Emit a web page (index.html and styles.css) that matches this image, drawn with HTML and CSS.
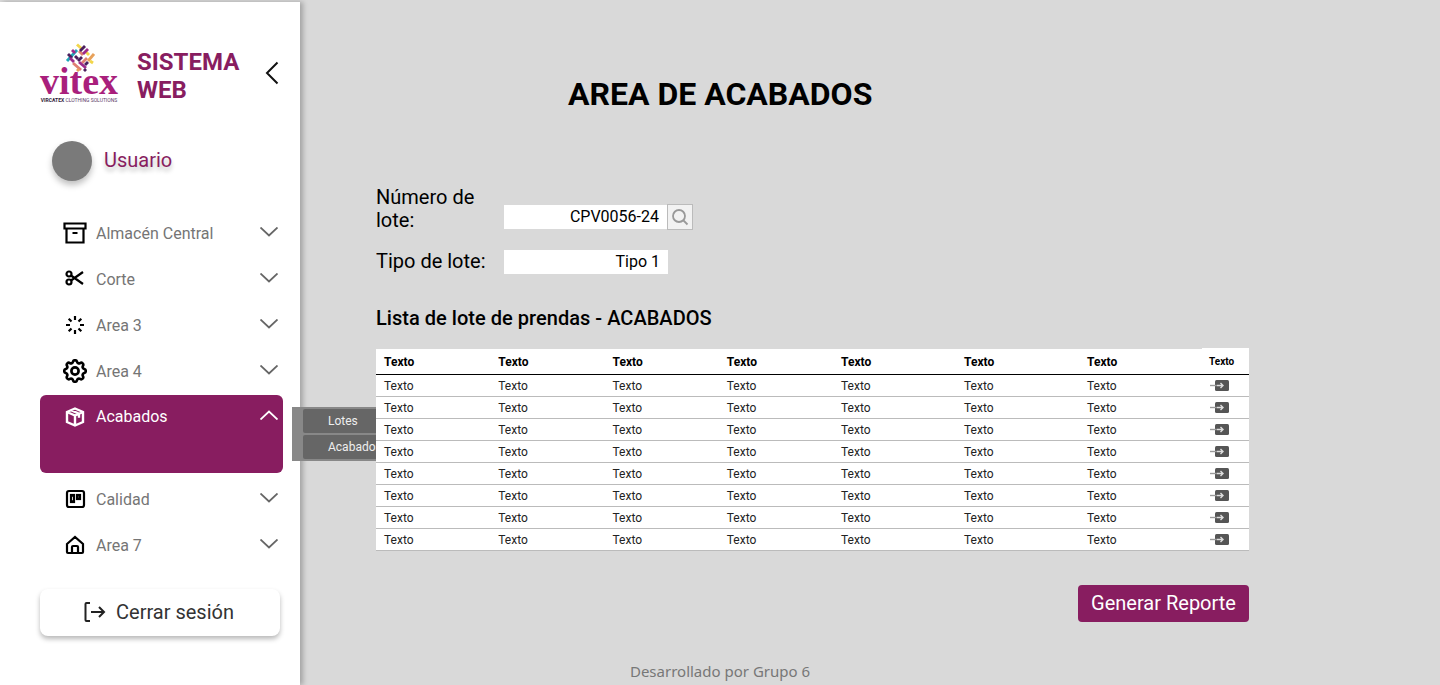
FILE: index.html
```html
<!DOCTYPE html>
<html lang="es">
  <head>
    <meta charset="utf-8"/>
    <title>Sistema Web - Area de acabados</title>
    <link rel="stylesheet" href="styles.css">
  </head>
  <body>
    <aside class="sidebar">
      <div class="brand">
        <div class="logo">
          <svg class="logo-mark" width="30" height="30" viewBox="0 0 30 30" fill="none" stroke-width="2.900">
            <path stroke="#f2d64b" d="M12 1.500 17 6"/>
            <path stroke="#f2d64b" d="M21 9 24 12"/>
            <path stroke="#1fa7b8" d="M2 18 12 7"/>
            <path stroke="#4b1f5e" d="M3 11 7 15"/>
            <path stroke="#9c2a8b" d="M7 7 10 10"/>
            <path stroke="#4b1f5e" d="M10 13 13 16"/>
            <path stroke="#e07f72" d="M14 8 18 12"/>
            <path stroke="#4b1f5e" d="M20 3 15 8"/>
            <path stroke="#9c2a8b" d="M23 6 18 11"/>
            <path stroke="#4b1f5e" d="M17 14 13 18"/>
            <path stroke="#e07f72" d="M22 15 17 20"/>
            <path stroke="#e8a15a" d="M29 11 23 18"/>
            <path stroke="#f2d64b" d="M25 18 28 20"/>
            <path stroke="#e07f72" d="M8 20 16 27"/>
            <path stroke="#9c2a8b" d="M5 15 9 19"/>
            <path stroke="#9c2a8b" d="M14 19 21 25"/>
            <path stroke="#4b1f5e" d="M20 22 23 19"/>
            <path stroke="#e8a15a" d="M12 28 14 26"/>
            <path stroke="#4b1f5e" d="M19 28 21 26"/>
          </svg>
          <div class="logo-name">vitex</div>
          <div class="logo-tag"><b>VIRCATEX</b> CLOTHING SOLUTIONS</div>
        </div>
        <div class="brand-title">SISTEMA WEB</div>
        <svg class="brand-back" width="14" height="24" viewBox="0 0 14 24" fill="none" stroke="#111" stroke-width="2"><path d="M12.5 1.5 2 12l10.5 10.5"/></svg>
      </div>

      <div class="user">
        <span class="avatar"></span>
        <span class="user-name">Usuario</span>
      </div>

      <ul class="menu">
        <li class="menu-item">
          <svg class="menu-icon" viewBox="0 0 24 24"><path d="M1.500 2.500h21v5h-21zM3.500 7.500v14h17v-14M9.500 12h5"/></svg>
          <span class="menu-text">Almacén Central</span>
          <svg class="menu-arrow" viewBox="0 0 18 10"><path d="M.5.500 9 8.500 17.500.5"/></svg>
        </li>
        <li class="menu-item">
          <svg class="menu-icon" viewBox="0 0 24 24"><circle cx="6" cy="7" r="2.500"/><circle cx="6" cy="15" r="2.500"/><path d="M8 8.500 20 17M8 13.500 20 5"/></svg>
          <span class="menu-text">Corte</span>
          <svg class="menu-arrow" viewBox="0 0 18 10"><path d="M.5.500 9 8.500 17.500.5"/></svg>
        </li>
        <li class="menu-item">
          <svg class="menu-icon" viewBox="0 0 24 24"><path d="M12 3v4M12 17v4M3 12h4M17 12h4M5.700 5.700l2.800 2.800M15.500 15.500l2.800 2.800M5.700 18.300l2.800-2.800M15.500 8.500l2.800-2.800"/></svg>
          <span class="menu-text">Area 3</span>
          <svg class="menu-arrow" viewBox="0 0 18 10"><path d="M.5.500 9 8.500 17.500.5"/></svg>
        </li>
        <li class="menu-item">
          <svg class="menu-icon" viewBox="2 2 20 20"><path d="M10.325 4.317c.426-1.756 2.924-1.756 3.35 0a1.724 1.724 0 0 0 2.573 1.066c1.543-.94 3.31.826 2.37 2.37a1.724 1.724 0 0 0 1.065 2.572c1.756.426 1.756 2.924 0 3.35a1.724 1.724 0 0 0-1.066 2.573c.94 1.543-.826 3.31-2.37 2.37a1.724 1.724 0 0 0-2.572 1.065c-.426 1.756-2.924 1.756-3.35 0a1.724 1.724 0 0 0-2.573-1.066c-1.543.94-3.31-.826-2.37-2.37a1.724 1.724 0 0 0-1.065-2.572c-1.756-.426-1.756-2.924 0-3.35a1.724 1.724 0 0 0 1.066-2.573c-.94-1.543.826-3.31 2.37-2.37c1 .608 2.296.07 2.572-1.065z"/><circle cx="12" cy="12" r="3"/></svg>
          <span class="menu-text">Area 4</span>
          <svg class="menu-arrow" viewBox="0 0 18 10"><path d="M.5.500 9 8.500 17.500.5"/></svg>
        </li>
        <li class="menu-item active">
          <svg class="menu-icon" viewBox="0 0 24 24"><path d="M12 3.500l8 3.500v10l-8 3.500-8-3.500V7zM4 7l8 3.500L20 7M12 10.500v10M8 5.200l8 3.500v4"/></svg>
          <span class="menu-text">Acabados</span>
          <svg class="menu-arrow" viewBox="0 0 18 10"><path d="M.5 9.500 9 1.500l8.500 8"/></svg>
        </li>
        <li class="menu-item">
          <svg class="menu-icon" viewBox="0 0 24 24"><rect x="4" y="4" width="17" height="16" rx="2"/><rect x="8" y="8" width="3" height="7"/><rect x="14" y="8" width="3" height="4"/></svg>
          <span class="menu-text">Calidad</span>
          <svg class="menu-arrow" viewBox="0 0 18 10"><path d="M.5.500 9 8.500 17.500.5"/></svg>
        </li>
        <li class="menu-item">
          <svg class="menu-icon" viewBox="0 0 24 24"><path d="M4 11l8-7 8 7v8a1 1 0 0 1-1 1H5a1 1 0 0 1-1-1zM9 20v-6a1 1 0 0 1 1-1h4a1 1 0 0 1 1 1v6"/></svg>
          <span class="menu-text">Area 7</span>
          <svg class="menu-arrow" viewBox="0 0 18 10"><path d="M.5.500 9 8.500 17.500.5"/></svg>
        </li>
      </ul>

      <button class="logout">
        <svg width="24" height="24" viewBox="0 0 24 24" fill="none" stroke="#222" stroke-width="2"><path d="M8 3H4.500a1 1 0 0 0-1 1v16a1 1 0 0 0 1 1H8M9 12h13M17 7l5 5-5 5"/></svg>
        <span>Cerrar sesión</span>
      </button>
    </aside>

    <div class="submenu">
      <div class="submenu-item">Lotes</div>
      <div class="submenu-item">Acabados</div>
    </div>

    <main class="content">
      <h1 class="page-title">AREA DE ACABADOS</h1>

      <div class="form-row first">
        <label class="form-label">Número de lote:</label>
        <div class="form-value">CPV0056-24</div>
        <button class="search-btn">
          <svg width="18" height="18" viewBox="0 0 18 18" fill="none" stroke="#999" stroke-width="1.800"><circle cx="8" cy="8" r="6"/><path d="M12.500 12.500 16.500 16.500"/></svg>
        </button>
      </div>
      <div class="form-row">
        <label class="form-label">Tipo de lote:</label>
        <div class="form-value wide">Tipo 1</div>
      </div>

      <h2 class="list-title">Lista de lote de prendas - ACABADOS</h2>

      <table class="lots">
        <thead>
          <tr><th>Texto</th><th>Texto</th><th>Texto</th><th>Texto</th><th>Texto</th><th>Texto</th><th>Texto</th><th class="last">Texto</th></tr>
        </thead>
        <tbody>
          <tr><td>Texto</td><td>Texto</td><td>Texto</td><td>Texto</td><td>Texto</td><td>Texto</td><td>Texto</td><td class="last"><svg class="go" viewBox="0 0 20 12"><rect x="5" y="0" width="14" height="11" rx="1.500"/><path class="go-line" d="M0 5.500h7"/><path class="go-arrow" d="M7 5.500h6M10.500 3l2.500 2.500L10.500 8"/></svg></td></tr>
          <tr><td>Texto</td><td>Texto</td><td>Texto</td><td>Texto</td><td>Texto</td><td>Texto</td><td>Texto</td><td class="last"><svg class="go" viewBox="0 0 20 12"><rect x="5" y="0" width="14" height="11" rx="1.500"/><path class="go-line" d="M0 5.500h7"/><path class="go-arrow" d="M7 5.500h6M10.500 3l2.500 2.500L10.500 8"/></svg></td></tr>
          <tr><td>Texto</td><td>Texto</td><td>Texto</td><td>Texto</td><td>Texto</td><td>Texto</td><td>Texto</td><td class="last"><svg class="go" viewBox="0 0 20 12"><rect x="5" y="0" width="14" height="11" rx="1.500"/><path class="go-line" d="M0 5.500h7"/><path class="go-arrow" d="M7 5.500h6M10.500 3l2.500 2.500L10.500 8"/></svg></td></tr>
          <tr><td>Texto</td><td>Texto</td><td>Texto</td><td>Texto</td><td>Texto</td><td>Texto</td><td>Texto</td><td class="last"><svg class="go" viewBox="0 0 20 12"><rect x="5" y="0" width="14" height="11" rx="1.500"/><path class="go-line" d="M0 5.500h7"/><path class="go-arrow" d="M7 5.500h6M10.500 3l2.500 2.500L10.500 8"/></svg></td></tr>
          <tr><td>Texto</td><td>Texto</td><td>Texto</td><td>Texto</td><td>Texto</td><td>Texto</td><td>Texto</td><td class="last"><svg class="go" viewBox="0 0 20 12"><rect x="5" y="0" width="14" height="11" rx="1.500"/><path class="go-line" d="M0 5.500h7"/><path class="go-arrow" d="M7 5.500h6M10.500 3l2.500 2.500L10.500 8"/></svg></td></tr>
          <tr><td>Texto</td><td>Texto</td><td>Texto</td><td>Texto</td><td>Texto</td><td>Texto</td><td>Texto</td><td class="last"><svg class="go" viewBox="0 0 20 12"><rect x="5" y="0" width="14" height="11" rx="1.500"/><path class="go-line" d="M0 5.500h7"/><path class="go-arrow" d="M7 5.500h6M10.500 3l2.500 2.500L10.500 8"/></svg></td></tr>
          <tr><td>Texto</td><td>Texto</td><td>Texto</td><td>Texto</td><td>Texto</td><td>Texto</td><td>Texto</td><td class="last"><svg class="go" viewBox="0 0 20 12"><rect x="5" y="0" width="14" height="11" rx="1.500"/><path class="go-line" d="M0 5.500h7"/><path class="go-arrow" d="M7 5.500h6M10.500 3l2.500 2.500L10.500 8"/></svg></td></tr>
          <tr><td>Texto</td><td>Texto</td><td>Texto</td><td>Texto</td><td>Texto</td><td>Texto</td><td>Texto</td><td class="last"><svg class="go" viewBox="0 0 20 12"><rect x="5" y="0" width="14" height="11" rx="1.500"/><path class="go-line" d="M0 5.500h7"/><path class="go-arrow" d="M7 5.500h6M10.500 3l2.500 2.500L10.500 8"/></svg></td></tr>
        </tbody>
      </table>

      <div class="actions">
        <button class="report-btn">Generar Reporte</button>
      </div>

      <footer class="credits">Desarrollado por Grupo 6</footer>
    </main>
  </body>
</html>
```

FILE: styles.css
```css
:root {
	--purple: #881d60;
	--page-bg: #d9d9d9;
}
* {
	box-sizing: border-box;
}
html, body {
	height: 100%;
}
body {
	margin: 0;
	display: flex;
	overflow: hidden;
	background-color: var(--page-bg);
	font-family: Roboto, "Liberation Sans", sans-serif;
	color: #000;
}

/* sidebar */
.sidebar {
	width: 300px;
	height: 683px;
	margin-top: 2px;
	flex-shrink: 0;
	padding: 0 0 0 40px;
	background-color: #fff;
	box-shadow: 3px 0 5px rgba(0, 0, 0, 0.25);
}
.brand {
	display: flex;
	align-items: center;
	height: 62px;
	margin-top: 41px;
}
.logo {
	width: 78px;
	height: 62px;
	flex-shrink: 0;
	display: flex;
	flex-direction: column;
	align-items: center;
}
.logo-mark {
	flex-shrink: 0;
	margin-left: 1px;
}
.logo-name {
	font-family: "Liberation Serif", serif;
	font-weight: bold;
	font-size: 38px;
	line-height: 24px;
	margin-top: -4px;
	height: 28px;
	color: #a91f7c;
}
.logo-tag {
	font-size: 5px;
	line-height: 6px;
	white-space: nowrap;
	color: #5b3a66;
}
.logo-tag b {
	color: #2e1a3a;
}
.brand-title {
	width: 110px;
	margin: 4px 0 0 19px;
	font-weight: bold;
	font-size: 24px;
	line-height: 28px;
	color: var(--purple);
}
.brand-back {
	margin-left: 18px;
	margin-top: -2px;
}
.user {
	display: flex;
	align-items: center;
	gap: 12px;
	margin: 36px 0 0 12px;
}
.avatar {
	width: 40px;
	height: 40px;
	border-radius: 50%;
	background-color: #7a7a7a;
	box-shadow: 0 4px 6px rgba(0, 0, 0, 0.25);
}
.user-name {
	margin-top: -2px;
	font-size: 20px;
	color: var(--purple);
	text-shadow: 0 4px 4px rgba(0, 0, 0, 0.25);
}
.menu {
	list-style: none;
	margin: 29px 0 0 0;
	padding: 0;
	width: 243px;
}
.menu-item {
	display: flex;
	align-items: center;
	height: 46px;
	padding: 0 5px 0 23px;
	font-size: 16px;
	color: #757575;
}
.menu-icon {
	width: 24px;
	height: 24px;
	flex-shrink: 0;
	fill: none;
	stroke: #000;
	stroke-width: 2.2;
}
.menu-text {
	flex: 1;
	margin-left: 9px;
}
.menu-arrow {
	width: 18px;
	height: 10px;
	margin-top: -3px;
	fill: none;
	stroke: #666;
	stroke-width: 1.8;
}
.menu-item.active {
	height: 78px;
	margin: 1px 0 3px;
	padding-bottom: 35px;
	border-radius: 6px;
	background-color: var(--purple);
	color: #fff;
}
.menu-item.active .menu-icon {
	stroke: #fff;
	stroke-width: 2.4;
}
.menu-item.active .menu-arrow {
	stroke: #fff;
}
.logout {
	display: flex;
	align-items: center;
	justify-content: center;
	gap: 10px;
	width: 240px;
	height: 47px;
	margin-top: 21px;
	padding: 0 4px 2px 0;
	border: 0;
	border-radius: 8px;
	background-color: #fff;
	box-shadow: 0 3px 5px rgba(0, 0, 0, 0.28);
	font-family: inherit;
	font-size: 20px;
	color: #333;
}
.submenu {
	position: absolute;
	left: 292px;
	top: 407px;
	width: 110px;
	height: 54px;
	padding: 2px 0 2px 11px;
	background-color: #888;
	z-index: 1;
}
.submenu-item {
	height: 24px;
	margin-bottom: 2px;
	padding-left: 25px;
	border-radius: 2px;
	background-color: #666;
	font-size: 12px;
	line-height: 24px;
	color: #eee;
}

/* main area */
.content {
	flex: 1;
	padding: 75px 0 0 76px;
}
.page-title {
	margin: 0 0 0 192px;
	font-size: 32px;
	line-height: 38px;
	font-weight: bold;
}
.form-row {
	display: flex;
	align-items: center;
	margin-top: 18px;
	height: 23px;
	font-size: 20px;
}
.form-row.first {
	align-items: flex-end;
	height: 46px;
	margin-top: 73px;
}
.form-label {
	width: 128px;
	line-height: 23px;
}
.form-row.first .form-label {
	padding-right: 20px;
}
.form-value {
	width: 163px;
	height: 24px;
	padding-right: 8px;
	background-color: #fff;
	text-align: right;
	font-size: 16px;
	line-height: 24px;
}
.form-value.wide {
	width: 164px;
}
.form-row.first .form-value {
	margin-bottom: 3px;
}
.search-btn {
	display: flex;
	align-items: center;
	justify-content: center;
	width: 26px;
	height: 26px;
	margin-bottom: 2px;
	padding: 0;
	border: 1px solid #bbb;
	background-color: #f2f2f2;
}
.list-title {
	margin: 33px 0 0 0;
	font-size: 20px;
	line-height: 24px;
	font-weight: 500;
	letter-spacing: 0.03px;
}
.lots {
	position: relative;
	z-index: 2;
	width: 873px;
	margin-top: 19px;
	table-layout: fixed;
	border-collapse: collapse;
	background-color: #fff;
	font-size: 12px;
}
.lots th, .lots td {
	padding: 0 0 0 8px;
	text-align: left;
	overflow: visible;
	white-space: nowrap;
}
.lots th {
	height: 25px;
	padding-top: 1px;
	font-weight: bold;
	border-bottom: 1px solid #000;
}
.lots td {
	height: 22px;
	padding-top: 2px;
	border-bottom: 1px solid #bbb;
	color: #222;
}
.lots th:nth-child(-n+4) {
	width: 114.25px;
}
.lots th:nth-child(n+5) {
	width: 123px;
}
.lots th.last {
	width: 47px;
	padding: 0 0 0 7px;
	font-size: 10px;
	box-shadow: 0 -1px 0 #fff;
}
.lots td.last {
	padding-left: 8px;
}
.go {
	display: block;
	width: 20px;
	height: 12px;
}
.go rect {
	fill: #555;
}
.go-line {
	stroke: #999;
	stroke-width: 1.4;
}
.go-arrow {
	fill: none;
	stroke: #ddd;
	stroke-width: 1.4;
}
.actions {
	display: flex;
	justify-content: flex-end;
	width: 873px;
	margin-top: 34px;
}
.report-btn {
	width: 171px;
	height: 37px;
	border: 0;
	border-radius: 4px;
	background-color: var(--purple);
	font-family: inherit;
	font-size: 20px;
	color: #fff;
}
.credits {
	width: 688px;
	margin-top: 39px;
	text-align: center;
	font-family: "Noto Sans", sans-serif;
	font-size: 15px;
	line-height: 20px;
	color: #777;
}
```
